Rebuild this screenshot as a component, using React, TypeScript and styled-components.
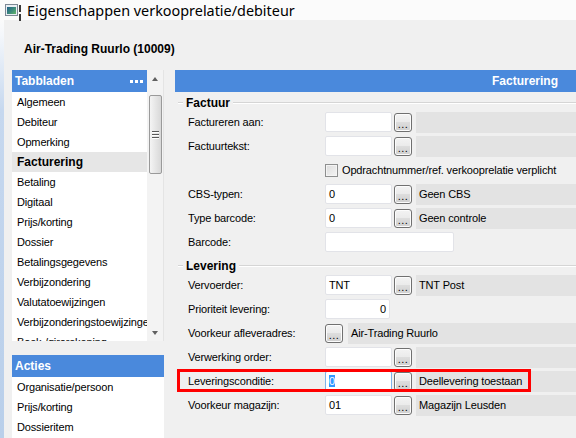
import React from "react";
import styled, { createGlobalStyle } from "styled-components";

const BLUE = "#4a89dc";

const GlobalStyle = createGlobalStyle`
  html, body {
    margin: 0;
    padding: 0;
  }
  body {
    font-family: "Liberation Sans", Arial, sans-serif;
    font-size: 11px;
    letter-spacing: -0.15px;
    color: #000;
    background: #f0f0f0;
  }
`;

const Window = styled.div`
  width: 576px;
  height: 438px;
  overflow: hidden;
  display: flex;
  flex-direction: column;
  background: #fbfbfb;
`;

const TitleBar = styled.div`
  height: 20px;
  flex: none;
  display: flex;
  align-items: center;
  padding-left: 5px;
  font-family: "Noto Sans", sans-serif;
  font-size: 14.4px;
  letter-spacing: 0;
  color: #000;
`;

/* caption glyph: a little form window with a coloured pane and a marker bar */
const FormGlyph = styled.span`
  position: relative;
  width: 13px;
  height: 12px;
  flex: none;
  margin-right: 9px;
  box-sizing: border-box;
  border: 1px solid #7d8995;
  background: #e9eef3;

  &::before {
    content: "";
    position: absolute;
    left: 1px;
    top: 2px;
    right: 1px;
    bottom: 1px;
    background: linear-gradient(135deg, #1f5f86, #3f8c7c 55%, #62b86a);
  }

  &::after {
    content: "";
    position: absolute;
    left: 13px;
    top: 0;
    width: 2px;
    height: 7px;
    background: #3a3a3a;
    box-shadow: 0 9px 0 -0px #3a3a3a;
  }
`;

const Frame = styled.div`
  flex: 1;
  display: flex;
  min-height: 0;
`;

const FrameEdge = styled.div`
  width: 4px;
  flex: none;
  background: linear-gradient(#fbfbfb 0, #f4f7fb 15px, #c6d8ef 90px, #b9cfea 100%);
`;

const Body = styled.div`
  flex: 1;
  min-width: 0;
  display: flex;
  flex-direction: column;
  background: #f0f0f0;
`;

const RecordTitle = styled.div`
  height: 50px;
  flex: none;
  box-sizing: border-box;
  padding: 8px 0 0 20px;
  display: flex;
  align-items: center;
  font-size: 12px;
  font-weight: bold;
  letter-spacing: 0;
`;

const Content = styled.div`
  flex: 1;
  min-height: 0;
  display: flex;
  gap: 11px;
  padding-left: 8px;
`;

const Sidebar = styled.div`
  width: 152px;
  flex: none;
  display: flex;
  flex-direction: column;
  gap: 14px;
`;

const TabPanel = styled.div`
  height: 271px;
  flex: none;
  display: grid;
  grid-template-columns: 135px 17px;
  grid-template-rows: 22px 1fr;
`;

const PanelHeader = styled.div<{ $align?: "left" | "right" }>`
  height: 22px;
  box-sizing: border-box;
  display: flex;
  align-items: center;
  justify-content: ${(p) => (p.$align === "right" ? "flex-end" : "space-between")};
  padding: ${(p) => (p.$align === "right" ? "0 18px 0 0" : "0 4px 0 3px")};
  background: ${BLUE};
  color: #fff;
  font-size: 12px;
  font-weight: bold;
  letter-spacing: 0;
`;

const Dots = styled.span`
  display: flex;
  gap: 2px;

  & > i {
    width: 3px;
    height: 3px;
    background: #fff;
  }
`;

const ItemList = styled.div`
  background: #fff;
  overflow: hidden;
  min-height: 0;
`;

const Item = styled.div<{ $active?: boolean }>`
  height: 20px;
  line-height: 20px;
  padding-left: 5px;
  white-space: nowrap;
  overflow: hidden;
  background: ${(p) => (p.$active ? "#e6e6e6" : "transparent")};
  font-weight: ${(p) => (p.$active ? "bold" : "normal")};
  font-size: ${(p) => (p.$active ? "12px" : "11px")};
  letter-spacing: ${(p) => (p.$active ? "0" : "-0.15px")};
`;

const ScrollBar = styled.div`
  grid-column: 2;
  grid-row: 1 / span 2;
  display: flex;
  flex-direction: column;
  background: #f3f3f3;
  border-right: 1px solid #e4e4e4;
`;

const ScrollArrow = styled.div<{ $down?: boolean }>`
  height: 17px;
  flex: none;
  display: flex;
  align-items: center;
  justify-content: center;

  &::before {
    content: "";
    border-left: 3.5px solid transparent;
    border-right: 3.5px solid transparent;
    ${(p) => (p.$down ? "border-top: 4px solid #606060;" : "border-bottom: 4px solid #606060;")}
  }
`;

const Track = styled.div`
  flex: 1;
`;

const Thumb = styled.div`
  height: 79px;
  margin: 8px 1px 0 2px;
  box-sizing: border-box;
  border: 1px solid #9a9a9a;
  border-radius: 2px;
  background: linear-gradient(to right, #f4f4f4, #e6e6e6 50%, #d8d8d8);
  display: flex;
  flex-direction: column;
  align-items: center;
  justify-content: center;
  gap: 2px;

  & > i {
    width: 7px;
    height: 1px;
    background: #5a5a5a;
    box-shadow: 0 1px 0 #fff;
  }
`;

const ActionPanel = styled.div`
  flex: 1;
  display: flex;
  flex-direction: column;
  background: #fff;
`;

const Main = styled.div`
  flex: 1;
  min-width: 0;
  display: flex;
  flex-direction: column;
`;

const Form = styled.div`
  padding-top: 2px;
`;

const SectionHeader = styled.div<{ $spaced?: boolean }>`
  height: 18px;
  margin-top: ${(p) => (p.$spaced ? "5px" : "0")};
  padding-left: 3px;
  display: flex;
  align-items: center;
  font-size: 12px;
  font-weight: bold;
  letter-spacing: 0;

  &::before,
  &::after {
    content: "";
    height: 0;
    border-top: 1px solid #d5d5d5;
    border-bottom: 1px solid #fff;
  }
  &::before {
    width: 5px;
    margin-right: 3px;
  }
  &::after {
    flex: 1;
    margin-left: 3px;
  }
`;

const Row = styled.div<{ $flagged?: boolean }>`
  height: 20px;
  margin-bottom: 4px;
  padding-left: 13px;
  display: flex;
  align-items: center;
  position: relative;

  ${(p) =>
    p.$flagged &&
    `&::after {
      content: "";
      position: absolute;
      left: 2px;
      top: -2px;
      width: 354px;
      height: 23px;
      box-sizing: border-box;
      border: 3px solid #ff0000;
    }`}
`;

const Label = styled.div`
  width: 137px;
  flex: none;
  white-space: nowrap;
`;

const TextBox = styled.div<{ $width?: number; $right?: boolean; $focused?: boolean }>`
  width: ${(p) => p.$width ?? 67}px;
  height: 20px;
  flex: none;
  box-sizing: border-box;
  padding: 0 3px;
  line-height: 18px;
  text-align: ${(p) => (p.$right ? "right" : "left")};
  background: #fff;
  border: 1px solid ${(p) => (p.$focused ? "#7eb4ea" : "#e2e3e8")};
  border-radius: 2px;
`;

const Selection = styled.span`
  background: #3399ff;
  color: #fff;
`;

const PickButton = styled.div<{ $flush?: boolean }>`
  width: 18px;
  height: 19px;
  flex: none;
  margin-left: ${(p) => (p.$flush ? "0" : "2px")};
  box-sizing: border-box;
  border: 1px solid #707070;
  border-radius: 3px;
  background: linear-gradient(#f3f3f3, #ebebeb 45%, #dddddd 50%, #cfcfcf);
  box-shadow: inset 0 0 0 1px #fcfcfc;
  display: flex;
  align-items: flex-end;
  justify-content: center;
  font-size: 11px;
  line-height: 14px;
  letter-spacing: 0.5px;
`;

const Description = styled.div<{ $gap?: number }>`
  flex: 1;
  height: 21px;
  margin-left: ${(p) => p.$gap ?? 4}px;
  padding-left: 3px;
  line-height: 21px;
  background: #e3e3e3;
  white-space: nowrap;
`;

const CheckBox = styled.div`
  width: 13px;
  height: 13px;
  flex: none;
  box-sizing: border-box;
  border: 1px solid #8e8f8f;
  background: linear-gradient(135deg, #dcdcdc, #f4f4f4);
  box-shadow: inset 0 0 0 1px #f4f4f4;
`;

const CheckText = styled.span`
  margin-left: 4px;
  white-space: nowrap;
`;

const tabs = [
  "Algemeen",
  "Debiteur",
  "Opmerking",
  "Facturering",
  "Betaling",
  "Digitaal",
  "Prijs/korting",
  "Dossier",
  "Betalingsgegevens",
  "Verbijzondering",
  "Valutatoewijzingen",
  "Verbijzonderingstoewijzingen",
  "Boek-/girorekening",
];

const actions = ["Organisatie/persoon", "Prijs/korting", "Dossieritem"];

type LookupProps = {
  label: string;
  value?: string;
  description?: string;
  flagged?: boolean;
  focused?: boolean;
};

const LookupRow = ({ label, value, description, flagged, focused }: LookupProps) => (
  <Row $flagged={flagged}>
    <Label>{label}</Label>
    <TextBox $focused={focused}>
      {focused && value ? <Selection>{value}</Selection> : value}
    </TextBox>
    <PickButton>...</PickButton>
    <Description>{description}</Description>
  </Row>
);

export default function App() {
  return (
    <>
      <GlobalStyle />
      <Window>
        <TitleBar>
          <FormGlyph />
          <span>Eigenschappen verkooprelatie/debiteur</span>
        </TitleBar>
        <Frame>
          <FrameEdge />
          <Body>
            <RecordTitle>Air-Trading Ruurlo (10009)</RecordTitle>
            <Content>
              <Sidebar>
                <TabPanel>
                  <PanelHeader>
                    Tabbladen
                    <Dots>
                      <i />
                      <i />
                      <i />
                    </Dots>
                  </PanelHeader>
                  <ItemList>
                    {tabs.map((t) => (
                      <Item key={t} $active={t === "Facturering"}>
                        {t}
                      </Item>
                    ))}
                  </ItemList>
                  <ScrollBar>
                    <ScrollArrow />
                    <Track>
                      <Thumb>
                        <i />
                        <i />
                        <i />
                      </Thumb>
                    </Track>
                    <ScrollArrow $down />
                  </ScrollBar>
                </TabPanel>
                <ActionPanel>
                  <PanelHeader>Acties</PanelHeader>
                  {actions.map((a) => (
                    <Item key={a}>{a}</Item>
                  ))}
                </ActionPanel>
              </Sidebar>
              <Main>
                <PanelHeader $align="right">Facturering</PanelHeader>
                <Form>
                  <SectionHeader>Factuur</SectionHeader>
                  <LookupRow label="Factureren aan:" />
                  <LookupRow label="Factuurtekst:" />
                  <Row>
                    <Label />
                    <CheckBox />
                    <CheckText>Opdrachtnummer/ref. verkooprelatie verplicht</CheckText>
                  </Row>
                  <LookupRow label="CBS-typen:" value="0" description="Geen CBS" />
                  <LookupRow label="Type barcode:" value="0" description="Geen controle" />
                  <Row>
                    <Label>Barcode:</Label>
                    <TextBox $width={129} />
                  </Row>

                  <SectionHeader $spaced>Levering</SectionHeader>
                  <LookupRow label="Vervoerder:" value="TNT" description="TNT Post" />
                  <Row>
                    <Label>Prioriteit levering:</Label>
                    <TextBox $width={65} $right>
                      0
                    </TextBox>
                  </Row>
                  <Row>
                    <Label>Voorkeur afleveradres:</Label>
                    <PickButton $flush>...</PickButton>
                    <Description $gap={5}>Air-Trading Ruurlo</Description>
                  </Row>
                  <LookupRow label="Verwerking order:" />
                  <LookupRow
                    label="Leveringsconditie:"
                    value="0"
                    description="Deellevering toestaan"
                    flagged
                    focused
                  />
                  <LookupRow label="Voorkeur magazijn:" value="01" description="Magazijn Leusden" />
                </Form>
              </Main>
            </Content>
          </Body>
        </Frame>
      </Window>
    </>
  );
}
